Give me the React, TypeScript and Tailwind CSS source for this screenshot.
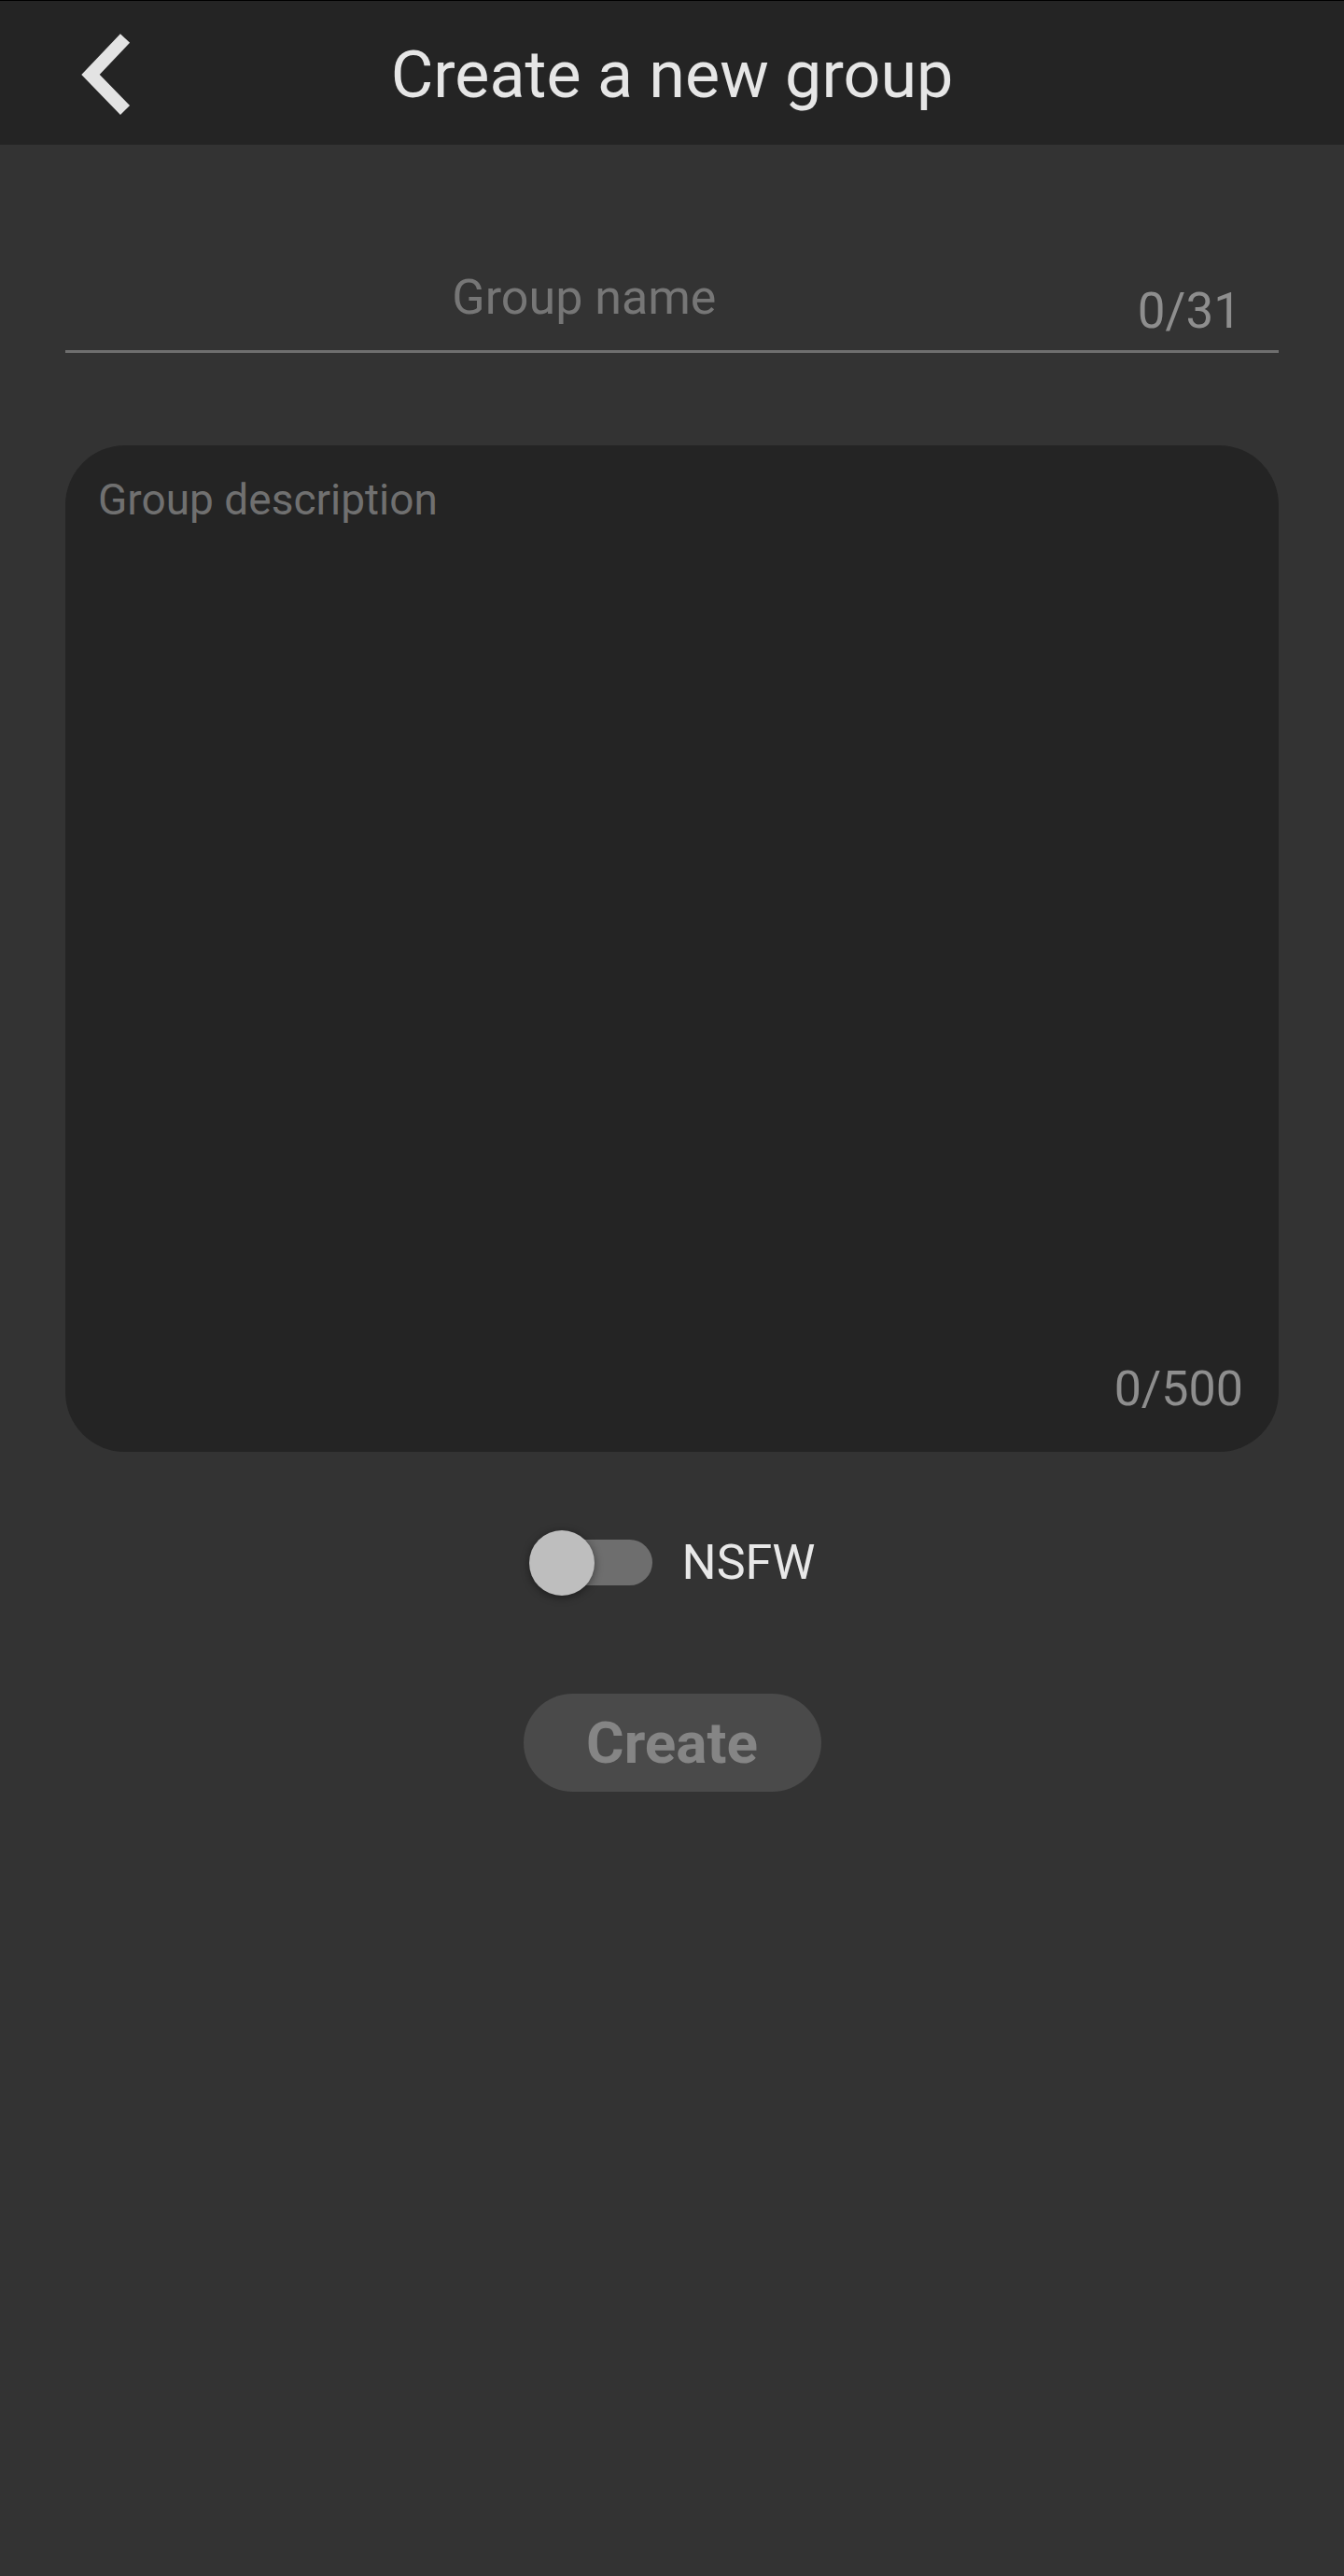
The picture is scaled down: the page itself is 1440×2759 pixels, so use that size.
import { useState } from 'react'

const BackIcon = () => (
  <svg width="80" height="100" viewBox="0 0 80 100" fill="none" aria-hidden>
    <polyline points="64,11 27,50 64,88" stroke="#e3e3e3" strokeWidth="14" strokeLinecap="butt" strokeLinejoin="miter" />
  </svg>
)

const Toggle = ({ on, onChange }: { on: boolean; onChange: (v: boolean) => void }) => (
  <button
    type="button"
    onClick={() => onChange(!on)}
    className="relative h-[70px] w-[132px] shrink-0"
    aria-pressed={on}
  >
    <span className="absolute left-[17px] top-[10px] h-[49px] w-[115px] rounded-full bg-[#6e6e6e]" />
    <span className="absolute left-0 top-0 h-[70px] w-[70px] rounded-full bg-[#bebebe] shadow-[0_2px_10px_rgba(0,0,0,0.45)]" />
  </button>
)

export default function App() {
  const [name, setName] = useState('')
  const [description, setDescription] = useState('')
  const [nsfw, setNsfw] = useState(false)

  return (
    <div className="min-h-screen bg-[#333333] font-['Roboto',sans-serif]">
      <header className="grid h-[155px] grid-cols-[1fr_auto_1fr] items-center border-t border-black bg-[#242424] pt-[4px]">
        <div className="flex items-center pl-[70px]">
          <BackIcon />
        </div>
        <h1 className="text-[70px] leading-none text-[#e6e6e6]">Create a new group</h1>
        <div />
      </header>

      <main className="flex flex-col px-[70px]">
        <div className="mt-[133px] flex items-end border-b-[3px] border-[#6f6f6f] pb-[11px]">
          <input
            value={name}
            maxLength={31}
            onChange={(e) => setName(e.target.value)}
            placeholder="Group name"
            className="mb-[14px] h-[62px] min-w-0 flex-1 bg-transparent text-center text-[52px] text-[#e6e6e6] outline-none placeholder:text-[#767676]"
          />
          <span className="ml-[37px] mr-[40px] text-[53px] leading-[62px] text-[#8e8e8e]">{name.length}/31</span>
        </div>

        <div className="mt-[99px] flex h-[1078px] flex-col rounded-[64px] bg-[#242424] pb-[36px] pl-[35px] pr-[38px] pt-[31px]">
          <textarea
            value={description}
            maxLength={500}
            onChange={(e) => setDescription(e.target.value)}
            placeholder="Group description"
            className="flex-1 resize-none bg-transparent text-[46px] leading-[54px] text-[#e6e6e6] outline-none placeholder:text-[#707070]"
          />
          <span className="text-right text-[52px] leading-[62px] text-[#8e8e8e]">{description.length}/500</span>
        </div>

        <div className="mt-[84px] flex items-center justify-center gap-[32px]">
          <Toggle on={nsfw} onChange={setNsfw} />
          <span className="text-[52px] leading-none text-[#e8e8e8]">NSFW</span>
        </div>

        <div className="mt-[105px] flex justify-center">
          <button
            type="button"
            disabled
            className="h-[105px] w-[319px] rounded-full bg-[#4a4a4a] text-[62px] font-bold leading-none text-[#858585]"
          >
            Create
          </button>
        </div>
      </main>
    </div>
  )
}
